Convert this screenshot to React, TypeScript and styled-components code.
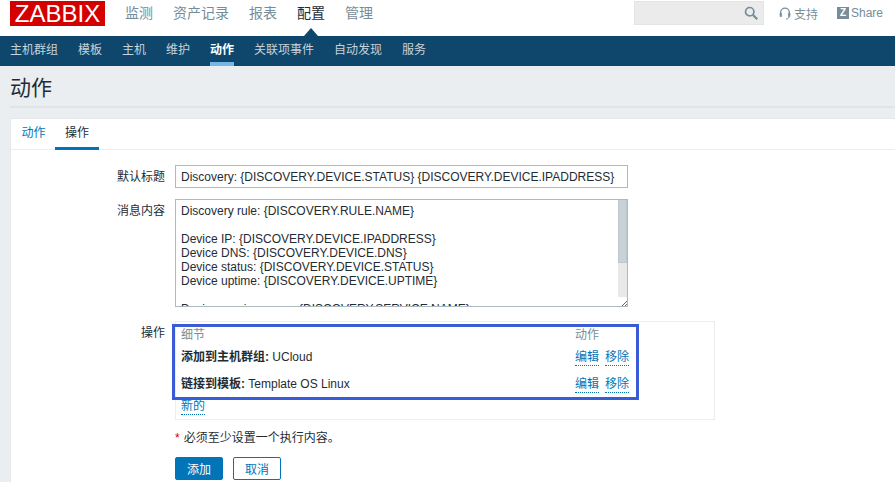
import React from "react";
import styled, { createGlobalStyle } from "styled-components";

const Global = createGlobalStyle`
  html, body { margin: 0; padding: 0; height: 482px; overflow: hidden; background: #ebeef0; }
  body { font-family: "Liberation Sans", "Noto Sans CJK SC", sans-serif; font-size: 12px; color: #1f2c33; }
  * { box-sizing: border-box; }
`;

const Page = styled.div`position: relative; width: 895px; height: 482px; overflow: hidden;`;

const Top = styled.header`
  height: 36px; background: #fff; display: flex; align-items: flex-start; padding: 1px 0 0 10px;
`;
const Logo = styled.div`
  width: 95px; height: 25px; background: #d40000; color: #fff; font-size: 24px; line-height: 25px;
  text-align: center; letter-spacing: 0; font-family: "Liberation Sans", sans-serif;
`;
const MainMenu = styled.nav`display: flex; gap: 20px; margin-left: 20px; padding-top: 3px;`;
const MainItem = styled.a<{ $active?: boolean }>`
  position: relative; font-size: 14px; line-height: 19px; color: ${p => (p.$active ? "#1f2c33" : "#768d99")};
  ${p => p.$active && `&::after { content: ""; position: absolute; left: 7px; top: 24px; border: 7.5px solid transparent; border-top: 0; border-bottom: 8px solid #0f476c; }`}
`;
const TopRight = styled.div`margin-left: auto; display: flex; align-items: center; height: 24px; padding-right: 12px;`;
const SearchBox = styled.div`
  width: 130px; height: 24px; background: #ebebeb; border: 1px solid #e4e4e4; display: flex; align-items: center; justify-content: flex-end; padding-right: 4px; color: #768d99;
`;
const TopLink = styled.span<{ $first?: boolean }>`
  display: flex; align-items: center; gap: ${p => (p.$first ? "3px" : "2px")}; color: #768d99; font-size: 12px; margin-left: ${p => (p.$first ? "15px" : "19px")};
`;
const ShareMark = styled.span`
  width: 12px; height: 12px; background: #768d99; color: #fff; font-size: 10px; font-weight: 700; line-height: 12px; text-align: center;
`;

const SubNav = styled.nav`height: 30px; background: #0f476c; display: flex; gap: 20px; padding-left: 10px;`;
const SubItem = styled.a<{ $active?: boolean }>`
  height: 30px; line-height: 28px; font-size: 12px; color: ${p => (p.$active ? "#fff" : "#c6d3db")};
  font-weight: ${p => (p.$active ? 700 : 400)};
  border-bottom: 4px solid ${p => (p.$active ? "#72b7e8" : "transparent")};
`;

const TitleBar = styled.div`
  height: 42px; margin-left: 10px; border-bottom: 2px solid #dfe4e7; display: flex; align-items: center; padding-top: 4px;
`;
const Title = styled.h1`margin: 0; font-size: 21px; font-weight: 400; color: #1f2c33; line-height: 28px;`;

const Panel = styled.main`
  margin: 10px 0 0 10px; height: 400px; background: #fff; border: 1px solid #e4e8ea; border-right: 0; border-bottom: 0;
`;
const Tabs = styled.div`height: 31px; display: flex; padding-left: 1px; border-bottom: 1px solid #ebeef0;`;
const Tab = styled.a<{ $active?: boolean }>`
  width: ${p => (p.$active ? 44 : 43)}px; height: 31px; text-align: center; line-height: 29px; font-size: 12px;
  color: ${p => (p.$active ? "#1f2c33" : "#0275b8")};
  border-bottom: 3px solid ${p => (p.$active ? "#0275b8" : "transparent")};
`;

const Form = styled.div`display: grid; grid-template-columns: 154px 540px; column-gap: 10px; padding-top: 15px; align-items: start;`;
const Label = styled.div`text-align: right; line-height: 20px; padding-top: 2px; color: #1f2c33; font-size: 12px;`;
const Cell = styled.div<{ $gap?: number }>`margin-bottom: ${p => p.$gap ?? 11}px;`;
const TextInput = styled.input`
  display: block; width: 453px; height: 23px; border: 1px solid #acbbc2; padding: 0 5px; font: 12px "Liberation Sans", sans-serif; color: #1f2c33; background: #fff; outline: 0;
`;
const MessageWrap = styled.div`position: relative; width: 453px; height: 108px;`;
const Message = styled.textarea`
  display: block; width: 453px; height: 108px; border: 1px solid #acbbc2; padding: 4px 5px; font: 12px/14px "Liberation Sans", sans-serif; color: #1f2c33; background: #fff; outline: 0; resize: none; overflow: hidden;
`;
const Track = styled.div`
  position: absolute; right: 1px; top: 1px; bottom: 1px; width: 9px; background: #e9e9e9; display: flex; flex-direction: column;
`;
const Thumb = styled.div`height: 63px; background: #c8d2d6; border: 1px solid #bcc8cd; border-top-width: 0;`;
const Grip = styled.div`
  margin-top: auto; height: 9px; background: #fff; display: flex; align-items: flex-end; justify-content: flex-end;
`;
const OpsBox = styled.div`width: 540px; height: 99px; border: 1px solid #ebeef0; padding: 3px 5px 0;`;
const OpsTable = styled.div`display: grid; grid-template-columns: 394px 1fr;`;
const OpsHead = styled.div`color: #768d99; line-height: 20px; height: 20px;`;
const OpsCell = styled.div`height: 27px; line-height: 20px; padding-top: 2px; display: flex; gap: 6px;`;
const Bold = styled.b`font-weight: 700;`;
const Link = styled.a`
  color: #0275b8; border-bottom: 1px dotted #0275b8; height: 17px; line-height: 16px; margin-top: 2px; display: inline-block;
`;
const NewLink = styled(Link)`margin-top: -1px;`;
const Note = styled.div`line-height: 18px; color: #1f2c33;`;
const Star = styled.span`color: #d40000; margin-right: 4px;`;
const Actions = styled.div`display: flex; gap: 10px; margin-top: 10px;`;
const Primary = styled.button`
  width: 48px; height: 23px; background: #0275b8; color: #fff; border: 1px solid #0275b8; border-radius: 2px; font: 12px "Liberation Sans", "Noto Sans CJK SC", sans-serif; padding: 0;
`;
const Secondary = styled(Primary)`background: #fff; color: #0275b8;`;

const Highlight = styled.div`
  position: absolute; left: 172px; top: 324px; width: 467px; height: 76px; border: 3px solid #3a5bd8; pointer-events: none;
`;

const message = `Discovery rule: {DISCOVERY.RULE.NAME}

Device IP: {DISCOVERY.DEVICE.IPADDRESS}
Device DNS: {DISCOVERY.DEVICE.DNS}
Device status: {DISCOVERY.DEVICE.STATUS}
Device uptime: {DISCOVERY.DEVICE.UPTIME}

Device service name: {DISCOVERY.SERVICE.NAME}
Device service port: {DISCOVERY.SERVICE.PORT}
Device service status: {DISCOVERY.SERVICE.STATUS}
Device service uptime: {DISCOVERY.SERVICE.UPTIME}`;

export default function App() {
  return (
    <Page>
      <Global />
      <Top>
        <Logo>ZABBIX</Logo>
        <MainMenu>
          <MainItem>监测</MainItem>
          <MainItem>资产记录</MainItem>
          <MainItem>报表</MainItem>
          <MainItem $active>配置</MainItem>
          <MainItem>管理</MainItem>
        </MainMenu>
        <TopRight>
          <SearchBox>
            <svg width="16" height="16" viewBox="0 0 16 16" fill="none" stroke="#768d99" strokeWidth="1.7">
              <circle cx="6.7" cy="6.7" r="4.2" />
              <path d="M9.8 9.8l4.4 4.4" strokeWidth="2.2" />
            </svg>
          </SearchBox>
          <TopLink $first>
            <svg width="12" height="13" viewBox="0 0 12 13" fill="none" stroke="#768d99" strokeWidth="1.3">
              <path d="M1.6 8V5.6a4.4 4.4 0 0 1 8.8 0V8" />
              <path d="M1 6.2h1.6v3.4H1zM9.4 6.2H11v3.4H9.4z" fill="#768d99" strokeWidth="0.6" />
              <path d="M10 10c-.5 1.6-1.5 2-3 2" strokeWidth="1" />
            </svg>
            支持
          </TopLink>
          <TopLink>
            <ShareMark>Z</ShareMark>
            Share
          </TopLink>
        </TopRight>
      </Top>
      <SubNav>
        <SubItem>主机群组</SubItem>
        <SubItem>模板</SubItem>
        <SubItem>主机</SubItem>
        <SubItem>维护</SubItem>
        <SubItem $active>动作</SubItem>
        <SubItem>关联项事件</SubItem>
        <SubItem>自动发现</SubItem>
        <SubItem>服务</SubItem>
      </SubNav>
      <TitleBar>
        <Title>动作</Title>
      </TitleBar>
      <Panel>
        <Tabs>
          <Tab>动作</Tab>
          <Tab $active>操作</Tab>
        </Tabs>
        <Form>
          <Label>默认标题</Label>
          <Cell>
            <TextInput readOnly defaultValue="Discovery: {DISCOVERY.DEVICE.STATUS} {DISCOVERY.DEVICE.IPADDRESS}" />
          </Cell>
          <Label>消息内容</Label>
          <Cell $gap={14}>
            <MessageWrap>
              <Message readOnly defaultValue={message} />
              <Track>
                <Thumb />
                <Grip>
                  <svg width="5" height="5" viewBox="0 0 5 5" stroke="#666" strokeWidth="1">
                    <path d="M0 5l5-5M3 5l2-2" />
                  </svg>
                </Grip>
              </Track>
            </MessageWrap>
          </Cell>
          <Label>操作</Label>
          <Cell $gap={9}>
            <OpsBox>
              <OpsTable>
                <OpsHead>细节</OpsHead>
                <OpsHead>动作</OpsHead>
                <OpsCell>
                  <span><Bold>添加到主机群组:</Bold> UCloud</span>
                </OpsCell>
                <OpsCell>
                  <Link>编辑</Link>
                  <Link>移除</Link>
                </OpsCell>
                <OpsCell>
                  <span><Bold>链接到模板:</Bold> Template OS Linux</span>
                </OpsCell>
                <OpsCell>
                  <Link>编辑</Link>
                  <Link>移除</Link>
                </OpsCell>
              </OpsTable>
              <NewLink>新的</NewLink>
            </OpsBox>
          </Cell>
          <span />
          <div>
            <Note><Star>*</Star>必须至少设置一个执行内容。</Note>
            <Actions>
              <Primary>添加</Primary>
              <Secondary>取消</Secondary>
            </Actions>
          </div>
        </Form>
      </Panel>
      <Highlight />
    </Page>
  );
}
